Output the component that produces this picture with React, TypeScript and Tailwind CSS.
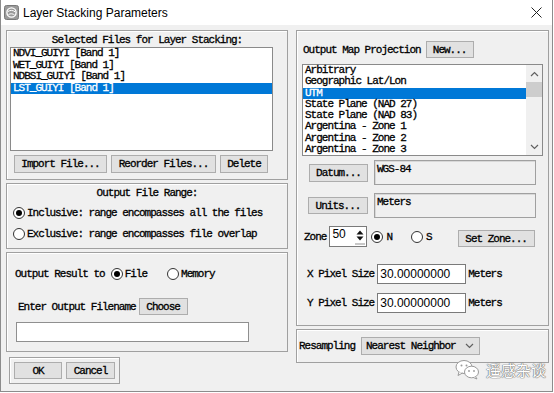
import React from 'react';

const mono = "font-['Liberation_Mono',monospace] text-[11px] leading-[12px] tracking-[-1px] text-black whitespace-nowrap [-webkit-text-stroke:0.3px_currentColor]";
const sans = "font-['Liberation_Sans',Arial,sans-serif] tracking-normal text-[12px] text-black [-webkit-text-stroke:0px]";

const Btn: React.FC<{ label: string; className?: string }> = ({ label, className = '' }) => (
  <div className={`flex items-center justify-center bg-[#e1e1e1] border border-[#adadad] shrink-0 ${className}`}>{label}</div>
);

const Radio: React.FC<{ checked?: boolean }> = ({ checked }) => (
  <span className="w-[12px] h-[12px] rounded-full border border-[#333] bg-white flex items-center justify-center shrink-0">
    {checked && <span className="w-[6px] h-[6px] rounded-full bg-black" />}
  </span>
);

const Group: React.FC<{ className?: string; children?: React.ReactNode }> = ({ className = '', children }) => (
  <div className={`border border-[#a0a0a0] shadow-[inset_1px_1px_0_#fff] flex flex-col shrink-0 ${className}`}>{children}</div>
);

const Chevron: React.FC<{ down?: boolean }> = ({ down }) => (
  <svg width="9" height="6" viewBox="0 0 9 6">
    <path d={down ? 'M1 1 L4.5 4.5 L8 1' : 'M1 5 L4.5 1.5 L8 5'} fill="none" stroke="#606060" strokeWidth="1.2" />
  </svg>
);

const files = ['NDVI_GUIYI [Band 1]', 'WET_GUIYI [Band 1]', 'NDBSI_GUIYI [Band 1]', 'LST_GUIYI [Band 1]'];
const projections = [
  'Arbitrary',
  'Geographic Lat/Lon',
  'UTM',
  'State Plane (NAD 27)',
  'State Plane (NAD 83)',
  'Argentina - Zone 1',
  'Argentina - Zone 2',
  'Argentina - Zone 3',
];

export default function App() {
  return (
    <div className={`w-[554px] h-[393px] bg-white relative overflow-hidden ${mono}`}>
      <div className="w-[553px] h-[392px] border-l border-r border-b border-[#8c8c8c] bg-[#f0f0f0] flex flex-col">
        {/* title bar */}
        <div className="h-[25px] bg-white flex items-center shrink-0">
          <svg className="ml-[3px]" width="15" height="15" viewBox="0 0 15 15">
            <rect x="0.5" y="0.5" width="14" height="14" rx="2" fill="#9a9a9a" stroke="#7a7a7a" />
            <circle cx="7.5" cy="7.5" r="4.6" fill="none" stroke="#fff" strokeWidth="1.4" />
            <path d="M4 6.5 C6 5 9 5 11 6.8 M4.5 9.5 C6.5 8.4 9 8.6 10.6 10" fill="none" stroke="#fff" strokeWidth="1" />
          </svg>
          <span className={`ml-[4px] ${sans} text-[12.5px]`}>Layer Stacking Parameters</span>
          <svg className="ml-auto mr-[10px]" width="11" height="11" viewBox="0 0 11 11">
            <path d="M0.5 0.5 L10.5 10.5 M10.5 0.5 L0.5 10.5" stroke="#222" strokeWidth="1" />
          </svg>
        </div>

        <div className="flex pl-[5px] pt-[5px] gap-[8px]">
          {/* left column */}
          <div className="w-[282px] flex flex-col shrink-0">
            <Group className="h-[150px]">
              <div className="mt-[3px] h-[12px] text-center">Selected Files for Layer Stacking:</div>
              <div className="mt-[1px] ml-[3px] w-[263px] h-[104px] bg-white border border-[#8a8a8a] flex flex-col">
                {files.map((f, i) => (
                  <div
                    key={f}
                    className={`h-[11.5px] leading-[11.5px] pl-[2px] ${i === 3 ? 'bg-[#0078d7] text-white' : ''}`}
                  >
                    {f}
                  </div>
                ))}
              </div>
              <div className="mt-[4px] ml-[7px] flex gap-[4px]">
                <Btn label="Import File..." className="w-[93px] h-[18px]" />
                <Btn label="Reorder Files..." className="w-[105px] h-[18px]" />
                <Btn label="Delete" className="w-[48px] h-[18px]" />
              </div>
            </Group>

            <Group className="mt-[3px] h-[66px]">
              <div className="mt-[3px] h-[12px] text-center">Output File Range:</div>
              <div className="mt-[7px] h-[14px] ml-[6px] flex items-center gap-[2px]">
                <Radio checked />
                <span>Inclusive: range encompasses all the files</span>
              </div>
              <div className="mt-[7px] h-[14px] ml-[6px] flex items-center gap-[2px]">
                <Radio />
                <span>Exclusive: range encompasses file overlap</span>
              </div>
            </Group>

            <Group className="mt-[3px] h-[100px]">
              <div className="mt-[14px] h-[14px] ml-[8px] flex items-center">
                <span>Output Result to</span>
                <span className="ml-[6px]"><Radio checked /></span>
                <span className="ml-[2px]">File</span>
                <span className="ml-[20px]"><Radio /></span>
                <span className="ml-[2px]">Memory</span>
              </div>
              <div className="mt-[17px] h-[17px] ml-[11px] flex items-center">
                <span>Enter Output Filename</span>
                <Btn label="Choose" className="ml-[3px] w-[49px] h-[17px]" />
              </div>
              <div className="mt-[7px] ml-[9px] w-[233px] h-[20px] bg-white border border-[#8f8f8f]" />
            </Group>

            <Group className="mt-[5px] ml-[3px] w-[111px] h-[27px]">
              <div className="mt-[4px] ml-[4px] flex gap-[4px]">
                <Btn label="OK" className="w-[48px] h-[17px]" />
                <Btn label="Cancel" className="w-[49px] h-[17px]" />
              </div>
            </Group>
          </div>

          {/* right column */}
          <div className="w-[253px] flex flex-col shrink-0">
            <Group className="h-[296px]">
              <div className="mt-[10px] h-[17px] pl-[6px] flex items-center">
                <span>Output Map Projection</span>
                <Btn label="New..." className="ml-[5px] w-[48px] h-[17px]" />
              </div>

              <div className="mt-[6px] ml-[5px] w-[241px] h-[92px] bg-white border border-[#8a8a8a] flex">
                <div className="flex-1 flex flex-col">
                  {projections.map((p, i) => (
                    <div
                      key={p}
                      className={`h-[11.25px] leading-[11.25px] pl-[2px] ${i === 2 ? 'bg-[#0078d7] text-white' : ''}`}
                    >
                      {p}
                    </div>
                  ))}
                </div>
                <div className="w-[16px] bg-[#f0f0f0] flex flex-col items-center">
                  <div className="h-[17px] flex items-center justify-center"><Chevron /></div>
                  <div className="w-[16px] h-[15px] bg-[#cdcdcd]" />
                  <div className="flex-1" />
                  <div className="h-[17px] flex items-center justify-center"><Chevron down /></div>
                </div>
              </div>

              <div className="mt-[4px] h-[25px] flex items-start">
                <Btn label="Datum..." className="ml-[12px] mt-[4px] w-[59px] h-[18px]" />
                <div className="ml-[6px] w-[162px] h-[25px] border border-[#a0a0a0] shadow-[inset_1px_1px_0_#d8d8d8] pl-[2px] pt-[2px]">WGS-84</div>
              </div>

              <div className="mt-[8px] h-[25px] flex items-start">
                <Btn label="Units..." className="ml-[11px] mt-[4px] w-[60px] h-[17px]" />
                <div className="ml-[6px] w-[162px] h-[25px] border border-[#a0a0a0] shadow-[inset_1px_1px_0_#d8d8d8] pl-[2px] pt-[2px]">Meters</div>
              </div>

              <div className="mt-[8px] h-[21px] pl-[7px] flex items-center">
                <span>Zone</span>
                <div className="ml-[3px] w-[38px] h-[21px] bg-white border border-[#7a7a7a] flex items-start">
                  <span className={`pl-[2px] pt-[1px] flex-1 ${sans}`}>50</span>
                  <svg className="mr-[1px] mt-[1px]" width="10" height="17" viewBox="0 0 10 17">
                    <path d="M1.5 6.5 L5 2.5 L8.5 6.5 Z" fill="#111" />
                    <path d="M1.5 8.5 L5 12.5 L8.5 8.5 Z" fill="#111" />
                    <rect x="0" y="15" width="10" height="2" fill="#c8c8c8" />
                  </svg>
                </div>
                <span className="ml-[4px]"><Radio checked /></span>
                <span className="ml-[3px]">N</span>
                <span className="ml-[19px]"><Radio /></span>
                <span className="ml-[3px]">S</span>
                <Btn label="Set Zone..." className="ml-[26px] self-end w-[77px] h-[17px]" />
              </div>

              <div className="mt-[17px] h-[20px] pl-[10px] flex items-center">
                <span>X Pixel Size</span>
                <div className={`ml-[3px] w-[89px] h-[20px] bg-white border border-[#7a7a7a] flex items-center pl-[2px] ${sans}`}>30.00000000</div>
                <span className="ml-[2px]">Meters</span>
              </div>

              <div className="mt-[9px] h-[20px] pl-[10px] flex items-center">
                <span>Y Pixel Size</span>
                <div className={`ml-[3px] w-[89px] h-[20px] bg-white border border-[#7a7a7a] flex items-center pl-[2px] ${sans}`}>30.00000000</div>
                <span className="ml-[2px]">Meters</span>
              </div>
            </Group>

            <Group className="mt-[3px] h-[34px] justify-center">
              <div className="pl-[2px] flex items-center">
                <span>Resampling</span>
                <div className="ml-[6px] w-[119px] h-[18px] bg-[#e1e1e1] border border-[#adadad] flex items-center pl-[4px] pr-[5px]">
                  <span className="flex-1">Nearest Neighbor</span>
                  <Chevron down />
                </div>
              </div>
            </Group>
          </div>
        </div>
      </div>

      {/* watermark */}
      <div className="absolute left-[455px] top-[359px] flex items-center gap-[6px]">
        <svg width="25" height="21" viewBox="0 0 25 21">
          <ellipse cx="9" cy="8" rx="8" ry="6.5" fill="#fff" stroke="#9a9a9a" strokeWidth="1" />
          <path d="M4 13 L3 16.5 L7.5 14" fill="#fff" stroke="#9a9a9a" strokeWidth="1" />
          <ellipse cx="16.5" cy="13" rx="7" ry="5.8" fill="#fff" stroke="#9a9a9a" strokeWidth="1" />
          <path d="M20.5 17.5 L22 20 L18 18.4" fill="#fff" stroke="#9a9a9a" strokeWidth="1" />
          <circle cx="6.5" cy="6.5" r="1" fill="#9a9a9a" />
          <circle cx="11.5" cy="6.5" r="1" fill="#9a9a9a" />
          <circle cx="14" cy="12" r="0.9" fill="#9a9a9a" />
          <circle cx="19" cy="12" r="0.9" fill="#9a9a9a" />
        </svg>
        <span className="font-['Noto_Sans_CJK_SC',sans-serif] text-[15px] leading-[20px] tracking-normal text-white [-webkit-text-stroke:0px] [text-shadow:0_0_1px_#6f6f6f,0_0_1px_#6f6f6f,0_0_1px_#6f6f6f]">
          遥感杂谈
        </span>
      </div>
    </div>
  );
}
